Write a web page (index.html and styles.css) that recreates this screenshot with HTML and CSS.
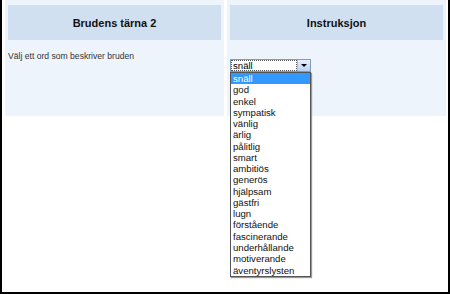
FILE: index.html
```html
<!doctype html>
<html lang="sv">
<head>
	<meta charset="utf-8">
	<title>Brudens tärna 2</title>
	<link rel="stylesheet" href="styles.css">
</head>
<body>
	<div class="frame">
		<div class="table">
			<div class="cell">
				<div class="head">Brudens tärna 2</div>
				<p class="question">Välj ett ord som beskriver bruden</p>
			</div>
			<div class="cell">
				<div class="head">Instruksjon</div>
				<div class="combo">
					<div class="combo-box">
						<span class="combo-value">snäll</span>
						<span class="combo-btn"><i></i></span>
					</div>
					<!-- open option list -->
					<ul class="combo-list">
						<li class="sel">snäll</li>
						<li>god</li>
						<li>enkel</li>
						<li>sympatisk</li>
						<li>vänlig</li>
						<li>ärlig</li>
						<li>pålitlig</li>
						<li>smart</li>
						<li>ambitiös</li>
						<li>generös</li>
						<li>hjälpsam</li>
						<li>gästfri</li>
						<li>lugn</li>
						<li>förstående</li>
						<li>fascinerande</li>
						<li>underhållande</li>
						<li>motiverande</li>
						<li>äventyrslysten</li>
					</ul>
				</div>
			</div>
		</div>
	</div>
</body>
</html>
```
FILE: styles.css
```css
* {
	margin: 0;
	padding: 0;
	box-sizing: border-box;
}

html, body {
	height: 100%;
}

body {
	font-family: "Liberation Sans", Arial, sans-serif;
	font-size: 11px;
	color: #222;
	background: #fff;
}

.frame {
	height: 294px;
	border-left: 2px solid #000;
	border-right: 2px solid #000;
	border-bottom: 2px solid #000;
	padding: 0 2px 0 3px;
}

.table {
	display: flex;
	gap: 3px;
	height: 116px;
}

.cell {
	flex: 1;
	background: #eef4fb;
	padding: 5px 3px 0 3px;
}

.head {
	height: 35px;
	background: #d0e0f0;
	display: flex;
	align-items: center;
	justify-content: center;
	font-weight: bold;
	font-size: 11px;
	color: #111;
}

.question {
	margin-top: 11px;
	font-size: 8.6px;
	color: #333;
}

.combo {
	position: relative;
	margin-top: 19px;
	width: 81px;
}

.combo-box {
	display: flex;
	height: 13px;
	border: 1px solid #7f9db9;
	background: #fff;
}

.combo-value {
	flex: 1;
	border: 1px dotted #555;
	font-size: 9.6px;
	line-height: 10px;
	padding-left: 1px;
	color: #000;
}

.combo-btn {
	width: 13px;
	background: linear-gradient(#e6eefc, #b9d1f5);
	border-left: 1px solid #a6bde0;
	display: flex;
	align-items: center;
	justify-content: center;
}

.combo-btn i {
	width: 0;
	height: 0;
	border-left: 3px solid transparent;
	border-right: 3px solid transparent;
	border-top: 3px solid #000;
}

.combo-list {
	position: absolute;
	top: 13px;
	left: 0;
	width: 81px;
	list-style: none;
	background: #fff;
	border: 1px solid #555;
	box-shadow: 1px 1px 1px #999;
}

.combo-list li {
	height: 11.28px;
	line-height: 11px;
	padding-left: 2px;
	font-size: 9.6px;
	color: #111;
	white-space: nowrap;
}

.combo-list li.sel {
	background: #3399ff;
	color: #fff;
}
```
